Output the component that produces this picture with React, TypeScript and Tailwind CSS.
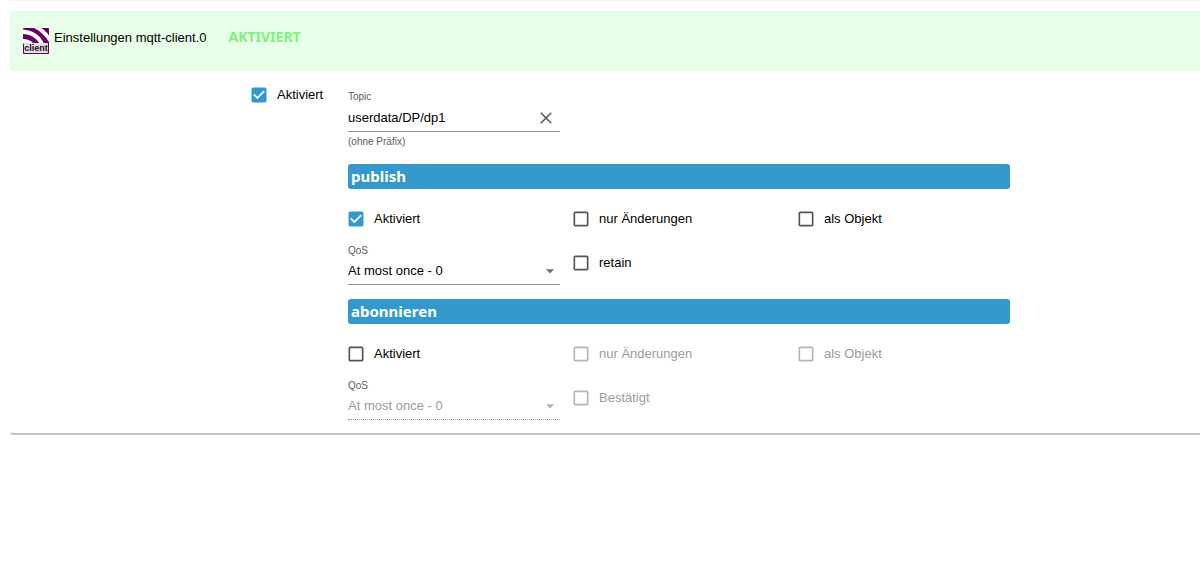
import { useId, useState } from "react";
import {
  MdArrowDropDown,
  MdCheckBox,
  MdCheckBoxOutlineBlank,
  MdClose,
} from "react-icons/md";

interface CheckFieldProps {
  label: string;
  defaultChecked?: boolean;
  disabled?: boolean;
}

function CheckField({
  label,
  defaultChecked = false,
  disabled = false,
}: CheckFieldProps) {
  const [checked, setChecked] = useState(defaultChecked);
  const Icon = checked ? MdCheckBox : MdCheckBoxOutlineBlank;
  const iconColor = disabled
    ? "text-[#b5b5b5]"
    : checked
      ? "text-[#3399cc]"
      : "text-[#555555]";

  return (
    <label
      className={`relative -ml-0.5 flex h-5 items-center gap-2 whitespace-nowrap ${disabled ? "text-[#9b9b9b]" : "text-black"}`}
    >
      <input
        type="checkbox"
        checked={checked}
        disabled={disabled}
        onChange={(e) => setChecked(e.target.checked)}
        className="absolute left-0 top-0 h-5 w-5 opacity-0"
      />
      <Icon className={`h-5 w-5 shrink-0 ${iconColor}`} />
      <span>{label}</span>
    </label>
  );
}

function QosSelect({ disabled = false }: { disabled?: boolean }) {
  const id = useId();

  return (
    <div>
      <label htmlFor={id} className="block text-[10px] leading-3 text-[#5c5c5c]">
        QoS
      </label>
      <div
        className={`relative border-b ${disabled ? "border-dotted border-[#949494] text-[#9b9b9b]" : "border-[#949494] text-black"}`}
      >
        <select
          id={id}
          disabled={disabled}
          defaultValue="0"
          className="block h-[27px] w-full appearance-none bg-transparent pr-6 opacity-100 outline-none"
        >
          <option value="0">At most once - 0</option>
          <option value="1">At least once - 1</option>
          <option value="2">Exactly once - 2</option>
        </select>
        <MdArrowDropDown
          className={`pointer-events-none absolute right-0 top-1 h-5 w-5 ${disabled ? "text-[#b5b5b5]" : "text-[#757575]"}`}
        />
      </div>
    </div>
  );
}

interface SectionProps {
  title: string;
  active: boolean;
  lastOption: string;
}

function Section({ title, active, lastOption }: SectionProps) {
  return (
    <section>
      <h2 className="h-[25px] rounded-[3px] bg-[#3399cc] pl-[3px] font-['Noto_Sans',sans-serif] text-[15px] font-bold leading-6 text-white">
        {title}
      </h2>
      <div className="mt-5 grid grid-cols-3 gap-x-[13px] gap-y-4">
        <CheckField label="Aktiviert" defaultChecked={active} />
        <CheckField label="nur Änderungen" disabled={!active} />
        <CheckField label="als Objekt" disabled={!active} />
        <QosSelect disabled={!active} />
        <div className="pt-2">
          <CheckField label={lastOption} disabled={!active} />
        </div>
      </div>
    </section>
  );
}

function ClientLogo() {
  return (
    <svg viewBox="0 0 26 26" className="h-[26px] w-[26px] shrink-0">
      <rect width="26" height="26" rx="1" fill="#660066" />
      <path d="M11 0H18C21.5 2 24 4.5 26 7.5V14C22.5 8 17.5 3 11 0Z" fill="#fff" />
      <path d="M0 1.5C9.500 2 17 7 21 15.500H16.500C13 9.500 7 6.300 0 6Z" fill="#fff" />
      <path d="M0 11C4.500 11 8 12.500 10.500 15.500H0Z" fill="#fff" />
      <rect x="1" y="15" width="24" height="10" rx="1" fill="#e3dce3" />
      <text
        x="13"
        y="23"
        textAnchor="middle"
        fontFamily="Liberation Sans, sans-serif"
        fontSize="9"
        fontWeight="700"
        fill="#111"
      >
        client
      </text>
    </svg>
  );
}

function TopicField() {
  const [topic, setTopic] = useState("userdata/DP/dp1");

  return (
    <div className="grid grid-cols-3 gap-x-[13px]">
      <div>
        <label
          htmlFor="topic"
          className="block text-[10px] leading-3 text-[#5c5c5c]"
        >
          Topic
        </label>
        <div className="flex h-[29px] items-center border-b border-[#949494] pr-1 pt-0.5">
          <input
            id="topic"
            type="text"
            value={topic}
            onChange={(e) => setTopic(e.target.value)}
            className="h-5 w-full min-w-0 bg-transparent outline-none"
          />
          <button
            type="button"
            aria-label="Löschen"
            onClick={() => setTopic("")}
            className="text-[#666666]"
          >
            <MdClose className="h-5 w-5" />
          </button>
        </div>
        <p className="mt-1 text-[10px] leading-3 text-[#5c5c5c]">
          (ohne Präfix)
        </p>
      </div>
    </div>
  );
}

export default function App() {
  return (
    <div className="bg-white pl-2.5 font-['Liberation_Sans',Arial,sans-serif] text-[13px] leading-5 text-black">
      <main className="rounded-bl-[3px] border-b-2 border-t border-b-[#c4c4c4] border-t-[#f7f7f7] pt-2.5">
        <header className="flex h-[60px] items-start bg-[#e6ffe6] pl-[13px] pt-[17px]">
          <ClientLogo />
          <h1 className="ml-[5px]">Einstellungen mqtt-client.0</h1>
          <span className="ml-[22px] font-['Noto_Sans',sans-serif] text-[14px] font-bold leading-[18px] text-[#80f080]">
            AKTIVIERT
          </span>
        </header>
        <div className="grid grid-cols-[241fr_97fr_662fr_190fr] pb-[13px]">
          <div className="col-start-2 pt-3.5">
            <CheckField label="Aktiviert" defaultChecked />
          </div>
          <div className="pt-5">
            <TopicField />
            <div className="mt-4 flex flex-col gap-3.5">
              <Section title="publish" active lastOption="retain" />
              <Section
                title="abonnieren"
                active={false}
                lastOption="Bestätigt"
              />
            </div>
          </div>
        </div>
      </main>
    </div>
  );
}
